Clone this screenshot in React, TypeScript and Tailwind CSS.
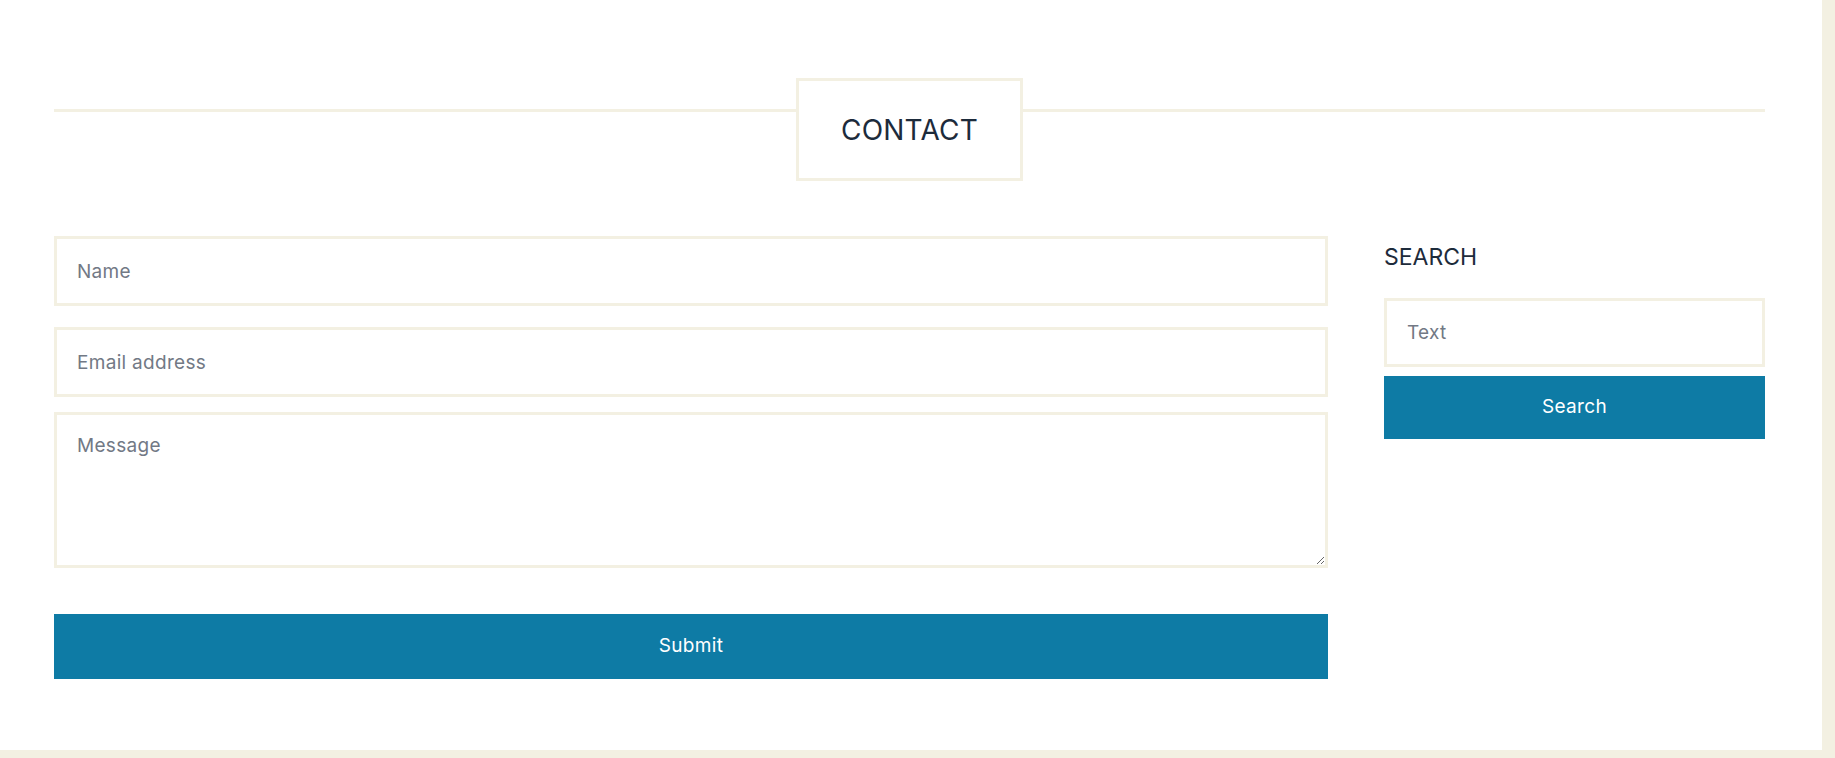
import React from 'react';

const beige = 'bg-[#f3f0e2]';

const App = () => {
  return (
    <div className={`w-full h-[758px] ${beige} font-['Inter',sans-serif]`}>
      <div className="w-[1822px] h-[750px] bg-white pt-[78px] pl-[54px] pr-[57px]">
        {/* Section title */}
        <div className="flex items-start">
          <div className="flex-1 mt-[31px] h-[3px] bg-[#f3f0e2]" />
          <div className="w-[227px] h-[103px] border-[3px] border-[#f3f0e2] flex items-center justify-center">
            <h2 className="text-[28px] text-[#1d2b3b] tracking-[0.2px]">CONTACT</h2>
          </div>
          <div className="flex-1 mt-[31px] h-[3px] bg-[#f3f0e2]" />
        </div>

        <div className="flex gap-[56px] mt-[55px]">
          {/* Contact form */}
          <form className="w-[1274px] flex flex-col" onSubmit={(e) => e.preventDefault()}>
            <input
              type="text"
              placeholder="Name"
              className="h-[70px] border-[3px] border-[#f3f0e2] px-[20px] text-[19px] tracking-[0.3px] text-[#1d2b3b] placeholder:text-[#727985] outline-none"
            />
            <input
              type="email"
              placeholder="Email address"
              className="h-[70px] mt-[21px] border-[3px] border-[#f3f0e2] px-[20px] text-[19px] tracking-[0.3px] text-[#1d2b3b] placeholder:text-[#727985] outline-none"
            />
            <textarea
              placeholder="Message"
              className="h-[156px] mt-[15px] border-[3px] border-[#f3f0e2] px-[20px] py-[19px] leading-[24px] text-[19px] tracking-[0.3px] text-[#1d2b3b] placeholder:text-[#727985] outline-none"
            />
            <button
              type="submit"
              className="h-[65px] mt-[46px] bg-[#0e7ba5] text-white text-[19px] tracking-[0.3px]"
            >
              Submit
            </button>
          </form>

          {/* Sidebar search */}
          <div className="w-[381px] flex flex-col">
            <h3 className="mt-[7px] text-[23px] leading-[28px] text-[#1d2b3b]">SEARCH</h3>
            <input
              type="text"
              placeholder="Text"
              className="h-[69px] mt-[27px] border-[3px] border-[#f3f0e2] px-[20px] text-[19px] tracking-[0.3px] text-[#1d2b3b] placeholder:text-[#727985] outline-none"
            />
            <button
              type="button"
              className="h-[63px] mt-[9px] bg-[#0e7ba5] text-white text-[19px] tracking-[0.3px]"
            >
              Search
            </button>
          </div>
        </div>
      </div>
    </div>
  );
};

export default App;
